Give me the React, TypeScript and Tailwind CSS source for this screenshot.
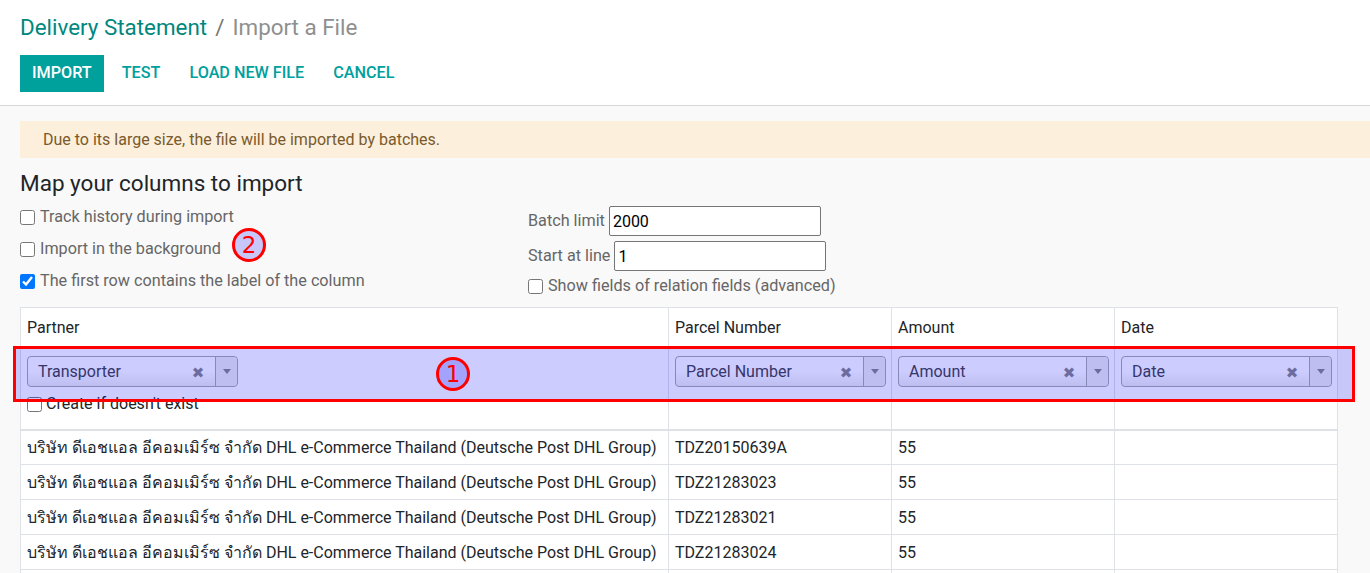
import React from 'react';

const font = { fontFamily: 'Roboto, "Noto Sans", "DejaVu Sans", sans-serif' };

const columns = [
  { name: 'Partner', field: 'Transporter', width: 'w-[648px]', create: true },
  { name: 'Parcel Number', field: 'Parcel Number', width: 'w-[223px]' },
  { name: 'Amount', field: 'Amount', width: 'w-[223px]' },
  { name: 'Date', field: 'Date', width: 'w-[223px]' },
];

const partner = 'บริษัท ดีเอชแอล อีคอมเมิร์ซ จำกัด DHL e-Commerce Thailand (Deutsche Post DHL Group)';

const rows = [
  { partner, parcel: 'TDZ20150639A', amount: '55' },
  { partner, parcel: 'TDZ21283023', amount: '55' },
  { partner, parcel: 'TDZ21283021', amount: '55' },
  { partner, parcel: 'TDZ21283024', amount: '55' },
];

const FieldSelect: React.FC<{ value: string }> = ({ value }) => (
  <div className="flex h-[31px] w-[211px] items-stretch rounded-[4px] border border-[#aaa] bg-gradient-to-t from-[#eee] to-white to-50%">
    <span className="flex-1 truncate pl-[10px] text-base leading-[29px] text-[#444]">{value}</span>
    <span className="flex w-[28px] items-center justify-center pr-[6px] pt-[4px] text-[15px] font-bold text-[#888]">✖</span>
    <span className="flex w-[22px] items-center justify-center rounded-r-[4px] border-l border-[#aaa] bg-[#eee]">
      <svg width="8" height="5" viewBox="0 0 8 5">
        <path d="M0 0 L8 0 L4 5 Z" fill="#888" />
      </svg>
    </span>
  </div>
);

const Marker: React.FC<{ n: string; className: string }> = ({ n, className }) => (
  <div
    className={`absolute flex h-[34px] w-[34px] items-center justify-center rounded-full border-[3px] border-[#ff0000] bg-[rgba(0,0,255,0.2)] text-[23px] leading-none text-[#ff0000] ${className}`}
    style={{ fontFamily: '"DejaVu Sans", sans-serif' }}
  >
    {n}
  </div>
);

export default function App() {
  return (
    <div className="relative h-[573px] overflow-hidden bg-[#f9f9f9]" style={font}>
      {/* control panel */}
      <div className="border-b border-[#d8d8d8] bg-white px-5 pt-[13px] pb-[13px]">
        <div className="flex h-[30px] items-center text-[22.4px]">
          <span className="text-[#00877e]">Delivery Statement</span>
          <span className="mx-[8px] text-[#777]">/</span>
          <span className="text-[#8f8f8f]">Import a File</span>
        </div>
        <div className="mt-[12px] flex h-[37px] items-center text-[16.2px] font-medium uppercase">
          <button className="h-[37px] bg-[#00a09d] px-[12px] text-white">IMPORT</button>
          <button className="ml-[6px] h-[37px] px-[12px] text-[#00a09d]">TEST</button>
          <button className="ml-[5px] h-[37px] px-[12px] text-[#00a09d]">LOAD NEW FILE</button>
          <button className="ml-[5px] h-[37px] px-[12px] text-[#00a09d]">CANCEL</button>
        </div>
      </div>

      <div className="pl-5 pt-[15px]">
        <div className="flex h-[37px] items-center bg-[#fcefdc] pl-[23px] text-base text-[#7a5a2b]">
          Due to its large size, the file will be imported by batches.
        </div>

        <h2 className="mt-[10px] h-[32px] text-[22.5px] leading-[31px] text-[#212529]">Map your columns to import</h2>

        <div className="flex h-[107px] text-[16.2px] text-[#666]">
          <div className="w-[508px] pt-[1px]">
            <label className="flex h-8 items-center gap-[5px]">
              <input type="checkbox" className="m-0 h-[15px] w-[15px]" />
              Track history during import
            </label>
            <label className="flex h-8 items-center gap-[5px]">
              <input type="checkbox" className="m-0 h-[15px] w-[15px]" />
              Import in the background
            </label>
            <label className="flex h-8 items-center gap-[5px]">
              <input type="checkbox" defaultChecked className="m-0 h-[15px] w-[15px]" />
              The first row contains the label of the column
            </label>
          </div>
          <div className="pt-[6px]">
            <div className="flex h-[30px] items-center gap-[4px]">
              <span>Batch limit</span>
              <input defaultValue="2000" className="h-[30px] w-[212px] rounded-[2px] border border-[#767676] bg-white px-[3px] text-base text-black" />
            </div>
            <div className="mt-[5px] flex h-[30px] items-center gap-[4px]">
              <span>Start at line</span>
              <input defaultValue="1" className="h-[30px] w-[212px] rounded-[2px] border border-[#767676] bg-white px-[3px] text-base text-black" />
            </div>
            <label className="flex h-[31px] items-center gap-[5px]">
              <input type="checkbox" className="m-0 h-[15px] w-[15px]" />
              Show fields of relation fields (advanced)
            </label>
          </div>
        </div>

        <table className="w-[1317px] table-fixed border-collapse bg-white text-base text-[#212529]">
          <colgroup>
            {columns.map((c) => (
              <col key={c.name} className={c.width} />
            ))}
          </colgroup>
          <thead>
            <tr className="h-[40px]">
              {columns.map((c) => (
                <th key={c.name} className="border border-[#dee2e6] px-[6px] text-left font-normal">
                  {c.name}
                </th>
              ))}
            </tr>
            <tr className="h-[82px] border-b-2 border-[#dee2e6]">
              {columns.map((c) => (
                <td key={c.name} className="border-x border-[#dee2e6] px-[6px] pt-[8px] align-top">
                  <FieldSelect value={c.field} />
                  {c.create && (
                    <label className="mt-[5px] flex items-center gap-[4px] leading-[24px] text-[#212529]">
                      <input type="checkbox" className="m-0 h-[15px] w-[15px]" />
                      Create if doesn't exist
                    </label>
                  )}
                </td>
              ))}
            </tr>
          </thead>
          <tbody>
            {rows.map((r, i) => (
              <tr key={i} className="h-[35px]">
                <td className="overflow-hidden whitespace-nowrap border border-[#dee2e6] px-[6px] pt-[2px]">{r.partner}</td>
                <td className="border border-[#dee2e6] px-[6px] pt-[2px]">{r.parcel}</td>
                <td className="border border-[#dee2e6] px-[6px] pt-[2px]">{r.amount}</td>
                <td className="border border-[#dee2e6] px-[6px] pt-[2px]"></td>
              </tr>
            ))}
            <tr className="h-[35px]">
              <td className="border border-[#dee2e6]"></td>
              <td className="border border-[#dee2e6]"></td>
              <td className="border border-[#dee2e6]"></td>
              <td className="border border-[#dee2e6]"></td>
            </tr>
          </tbody>
        </table>
      </div>

      {/* annotations */}
      <div className="absolute left-[13px] top-[346px] h-[56px] w-[1342px] border-[3px] border-[#ff0000] bg-[rgba(0,0,255,0.2)]" />
      <Marker n="1" className="left-[436px] top-[357px]" />
      <Marker n="2" className="left-[232px] top-[228px]" />
    </div>
  );
}
